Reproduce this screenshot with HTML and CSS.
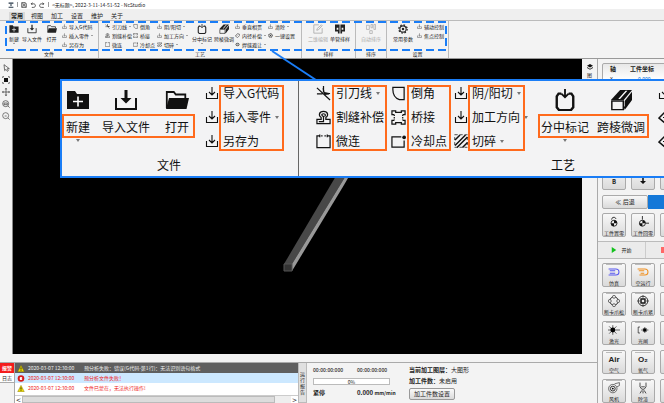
FILE: index.html
```html
<!DOCTYPE html>
<html lang="zh-CN">
<head>
<meta charset="utf-8">
<title>NcStudio</title>
<link rel="stylesheet" href="styles.css">
</head>
<body>
<svg class="defs" aria-hidden="true">
  <symbol id="newf" viewBox="0 0 24 20"><path d="M1 1h8l2 3h12v15H1z" fill="currentColor"/><path d="M12 6.500v10M7 11.500h10" stroke="#fff" stroke-width="1.600"/></symbol>
  <symbol id="import" viewBox="0 0 24 20"><path d="M2 8v11h20V8" fill="none" stroke="currentColor" stroke-width="2"/><path d="M10.500 0h3v8h4L12 13.500 6.500 8h4z" fill="currentColor"/></symbol>
  <symbol id="open" viewBox="0 0 24 20"><path d="M1.800 18V2h7l2 2.500h9.500V8" fill="none" stroke="currentColor" stroke-width="1.800"/><path d="M4 8h20l-2.500 11H1z" fill="currentColor"/></symbol>
  <symbol id="in" viewBox="0 0 14 14"><path d="M1.500 7v5.500h11V7M7 1v7.500M4 6l3 3 3-3" fill="none" stroke="currentColor" stroke-width="1.100"/></symbol>
  <symbol id="lead" viewBox="0 0 16 16"><path d="M1 2l14 13M1 8.500h6M8 0v7M15 8H9" fill="none" stroke="currentColor" stroke-width="1.300"/><path d="M7 3l1-2 1 5.500 5 1v1.500l-5 .5z" fill="currentColor"/></symbol>
  <symbol id="kerf" viewBox="0 0 16 16"><path d="M1 14.500V10h4.500V8C2.500 6 3 1.500 8 1.500S13.500 6 10.500 8v2H15v4.500zM3 12.300h5V7C5.500 6 5.500 4 8 4s2.500 2 1 3" fill="none" stroke="currentColor" stroke-width="1.300"/></symbol>
  <symbol id="micro" viewBox="0 0 16 16"><path d="M4 2H1v12.500h14V2h-3M5.500 2H7M9 2h1.500" fill="none" stroke="currentColor" stroke-width="1.300"/><path d="M4 .5v3M12 .5v3" stroke="currentColor" stroke-width="1.300"/></symbol>
  <symbol id="chamfer" viewBox="0 0 16 16"><path d="M14 1.500v13H9C4.500 13 2 9 2 4V1.500z" fill="none" stroke="currentColor" stroke-width="1.300"/></symbol>
  <symbol id="bridge" viewBox="0 0 16 16"><path d="M3.500 5H1V1h4v1.500h6V1h4v4h-2.500M3.500 11H1v4h4v-1.500h6V15h4v-4h-2.500" fill="none" stroke="currentColor" stroke-width="1.300"/><path d="M3.500 5v6M12.500 5v6" stroke="currentColor" stroke-width="1.300" stroke-dasharray="1.500 1"/></symbol>
  <symbol id="cool" viewBox="0 0 16 16"><path d="M11 3H1v11h13V7" fill="none" stroke="currentColor" stroke-width="1.300"/><circle cx="14" cy="3.500" r="2" fill="currentColor"/></symbol>
  <symbol id="hatch" viewBox="0 0 14 14"><path d="M1 6l5-5M1 11.500L11.500 1M3 13.500L13.500 3M8.500 13.500l5-5" stroke="currentColor" stroke-width="1.500"/><path d="M.7 .7h12.600v12.600H.7z" fill="none" stroke="currentColor" stroke-width=".7" stroke-dasharray="3 2"/></symbol>
  <symbol id="center" viewBox="0 0 24 24"><path d="M8 5H5L3 8v12l2.500 3h13L21 20V8l-2-3h-3" fill="none" stroke="currentColor" stroke-width="2.600"/><path d="M12 0v8M8 5l4 4 4-4" fill="none" stroke="currentColor" stroke-width="2"/></symbol>
  <symbol id="cube" viewBox="0 0 24 24"><path d="M1 12L11 1h13l-9 11z" fill="currentColor"/><path d="M16 13l8-10v9l-8 11z" fill="currentColor"/><path d="M2 13h12.500v9.500H2zM14.500 22l8.500-11" fill="none" stroke="currentColor" stroke-width="1.600"/><path d="M9 11l8-9h2l-8 9z" fill="#fff"/></symbol>
  <symbol id="tag" viewBox="0 0 14 14"><path d="M1 8l6-6 5 1 1 4-6 6z" fill="none" stroke="currentColor" stroke-width="1.500"/><path d="M5 8l3-3" stroke="currentColor"/></symbol>
  <symbol id="eye" viewBox="0 0 14 14"><path d="M1 7c3-5 9-5 12 0-3 5-9 5-12 0zM5 3v8M9 3v8" fill="none" stroke="currentColor" stroke-width="1.400"/></symbol>
  <symbol id="gear" viewBox="0 0 24 24"><circle cx="12" cy="12" r="7.500" fill="none" stroke="currentColor" stroke-width="2.500"/><circle cx="12" cy="12" r="10" fill="none" stroke="currentColor" stroke-width="3" stroke-dasharray="3.900 3.950"/><circle cx="12" cy="12" r="3" fill="currentColor"/></symbol>
  <symbol id="edit" viewBox="0 0 24 24"><path d="M14 2H2v20h20V10M9 15l1-4L20 2l2 2-9 10z" fill="none" stroke="currentColor" stroke-width="2"/></symbol>
  <symbol id="nest" viewBox="0 0 24 24"><path d="M0 1h11v15H8V9H4v5h7v9H7v-5H0zM13 1h11v17h-7v5h-4v-9h7V9h-4v7h-3z" fill="currentColor"/></symbol>
  <symbol id="sort" viewBox="0 0 24 24"><path d="M1 3h7v10H1zM12 1h4v8h-4zM19 1h4v12h-4zM9 16h6v7H9z" fill="none" stroke="currentColor" stroke-width="1.800"/></symbol>
  <symbol id="warn" viewBox="0 0 10 10"><path d="M5 .5L9.700 9.500H.3z" fill="#f0e000" stroke="#776600" stroke-width=".6"/><path d="M5 3.500v3M5 7.500v1" stroke="#111" stroke-width="1.200"/></symbol>
  <symbol id="err" viewBox="0 0 10 10"><circle cx="5" cy="5" r="4.700" fill="#d81818"/><path d="M3.500 3.500l3 3M6.500 3.500l-3 3" stroke="#fff" stroke-width="1.800"/></symbol>
</svg>

<header class="titlebar">
  <svg class="logo" viewBox="0 0 10 10"><path d="M1 1h8v2H1zM1 8h8v1.500H1zM3 4h4L5 7z" fill="#234"/></svg>
  <i class="vr"></i>
  <button aria-label="保存"><svg viewBox="0 0 10 10"><path d="M1 1h6l2 2v6H1zM3 1v3h4V1M3 9V6h4v3" fill="none" stroke="#222"/></svg></button>
  <button aria-label="撤销"><svg viewBox="0 0 10 10"><path d="M4 1L2 3l2 2M2 3h4c4 0 4 6 0 6H3" fill="none" stroke="#222" stroke-width="1.200"/></svg></button>
  <button aria-label="重做"><svg viewBox="0 0 10 10"><path d="M6 1l2 2-2 2M8 3H4C0 3 0 9 4 9h4" fill="none" stroke="#222" stroke-width="1.200"/></svg></button>
  <i class="vr"></i>
  <span>&lt;无标题&gt;, 2022-3-11-14-51-52 - NcStudio</span>
</header>
<nav class="tabs">
  <button class="on">常用</button><button>视图</button><button>加工</button><button>设置</button><button>维护</button><button>关于</button>
</nav>

<section class="ribbon">
  <div class="group g-file">
    <div class="cmds">
      <button class="big w14"><svg><use href="#newf"/></svg><span>新建</span><i class="caret"></i></button>
      <button class="big w22"><svg><use href="#import"/></svg><span>导入文件</span></button>
      <button class="big w17"><svg><use href="#open"/></svg><span>打开</span></button>
      <div class="rows r-file">
        <button><svg><use href="#in"/></svg>导入G代码</button>
        <button><svg><use href="#in"/></svg>插入零件<i class="caret"></i></button>
        <button><svg><use href="#in"/></svg>另存为</button>
      </div>
    </div>
    <h2>文件</h2>
  </div>
  <div class="group g-craft">
    <div class="cmds">
      <div class="rows w28">
        <button><svg><use href="#lead"/></svg>引刀线<i class="caret"></i></button>
        <button><svg><use href="#kerf"/></svg>割缝补偿</button>
        <button><svg><use href="#micro"/></svg>微连</button>
      </div>
      <div class="rows w24">
        <button><svg><use href="#chamfer"/></svg>倒角</button>
        <button><svg><use href="#bridge"/></svg>桥接</button>
        <button><svg><use href="#cool"/></svg>冷却点</button>
      </div>
      <div class="rows w34">
        <button><svg><use href="#in"/></svg>阴/阳切<i class="caret"></i></button>
        <button><svg><use href="#in"/></svg>加工方向<i class="caret"></i></button>
        <button><svg><use href="#hatch"/></svg>切碎<i class="caret"></i></button>
      </div>
      <button class="big w22"><svg><use href="#center"/></svg><span>分中标记</span><i class="caret"></i></button>
      <button class="big w22"><svg><use href="#cube"/></svg><span>跨棱微调</span></button>
      <div class="rows w33">
        <button><svg><use href="#in"/></svg>垂直相贯</button>
        <button><svg><use href="#tag"/></svg>内径补偿<i class="caret"></i></button>
        <button><svg><use href="#eye"/></svg>焊缝避让<i class="caret"></i></button>
      </div>
      <div class="rows">
        <button><svg><use href="#in"/></svg>清除<i class="caret"></i></button>
        <button><svg><use href="#gear"/></svg>一键设置</button>
      </div>
    </div>
    <h2>工艺</h2>
  </div>
  <div class="group g-nest">
    <div class="cmds">
      <button class="big w22" disabled><svg><use href="#edit"/></svg><span>二维编辑</span></button>
      <button class="big w22"><svg><use href="#nest"/></svg><span>单管排样</span></button>
    </div>
    <h2>排样</h2>
  </div>
  <div class="group g-sort">
    <div class="cmds">
      <button class="big w22" disabled><svg><use href="#sort"/></svg><span>自动排序</span></button>
    </div>
    <h2>排序</h2>
  </div>
  <div class="group g-set">
    <div class="cmds">
      <button class="big w22"><svg><use href="#gear"/></svg><span>常用参数</span></button>
      <div class="rows">
        <button><svg><use href="#in"/></svg>辅动控制</button>
        <button><svg><use href="#in"/></svg>焦点控制</button>
      </div>
    </div>
    <h2>设置</h2>
  </div>
</section>

<div class="body">
  <div class="left">
    <main class="work">
      <aside class="tools">
        <button aria-label="选择"><svg viewBox="0 0 12 12"><path d="M3 1l1 9 2-2 2 3 1.500-1L8 7h3z" fill="none" stroke="#333"/></svg></button>
        <button aria-label="框选"><svg viewBox="0 0 12 12"><path d="M3 3h6v6H3z" fill="#111"/><path d="M1 3V1h2M9 1h2v2M11 9v2H9M3 11H1V9" fill="none" stroke="#333"/></svg></button>
        <button aria-label="平移"><svg viewBox="0 0 12 12"><path d="M6 1v10M1 6h10" stroke="#333"/><path d="M6 0l2 2H4zM6 12l2-2H4zM0 6l2-2v4zM12 6l-2-2v4z" fill="#333"/></svg></button>
        <button aria-label="放大"><svg viewBox="0 0 12 12"><circle cx="5.500" cy="5.500" r="4.500" fill="none" stroke="#333"/><path d="M9 9l2.500 2.500M3 7V4.500h5V7z" fill="none" stroke="#333"/></svg></button>
        <button aria-label="缩放"><svg viewBox="0 0 12 12"><circle cx="5.500" cy="5.500" r="4.500" fill="none" stroke="#444"/><path d="M9 9l2.500 2.500M4 6h3" stroke="#444"/></svg></button>
      </aside>
      <div class="canvas">
        <svg class="beam"><path d="M271 205L333 100h10L279 205z" fill="#484848"/><path d="M279 205L343 100h3l-15 26-52 86z" fill="#999"/><path d="M271 205h8v7h-8z" fill="#333" stroke="#555"/></svg>
      </div>
      <div class="strip">
        <svg viewBox="0 0 12 12"><path d="M6 0l6 3.500L6 7 0 3.500z" fill="#111"/><path d="M0 6l6 3.500L12 6v2l-6 3.500L0 8z" fill="#333"/></svg>
        <span>图层</span>
      </div>
    </main>
    <footer class="dock">
      <div class="logtabs"><button class="on">报警</button><button>日志</button></div>
      <div class="log">
        <ul>
          <li class="sel"><svg class="st"><use href="#warn"/></svg><time>2020-03-07 12:30:00</time>预分析失败：错误(G代码-第1行)：无法识别语句格式</li>
          <li class="hl"><svg class="st"><use href="#err"/></svg><time>2020-03-07 12:30:00</time>预分析文件失败！</li>
          <li><svg class="st"><use href="#warn"/></svg><time>2020-03-07 12:30:00</time>文件已蒙在，无法执行操作!</li>
          <li><svg class="st"><use href="#warn"/></svg><time>2020-03-07 12:30:00</time>文件已蒙在，无法执行操作!</li>
        </ul>
        <div class="scroll"><button aria-label="向左">&lt;</button><i></i><button aria-label="向右">&gt;</button></div>
      </div>
      <button class="report">运行报告</button>
      <div class="run">
        <b class="t">00:00:00:000</b><b class="t">00:00:00:000</b>
        <div class="prog"><progress max="100" value="0" aria-label="进度"></progress><em>0%</em></div>
        <b>紧停</b><b>0.000 <small>mm/min</small></b>
      </div>
      <div class="part">
        <p><b>当前加工图层：</b>大图形</p>
        <p><b>加工件数：</b>未启用</p>
        <button>加工件数设置</button>
      </div>
    </footer>
  </div>

  <aside class="panel">
    <div class="axes">
      <table>
        <tr><th>轴</th><th>工件坐标</th></tr>
        <tr><td>X</td><td class="num">0.000</td></tr>
      </table>
    </div>
    <div class="keys jog"><button>B</button><button aria-label="向下"><svg viewBox="0 0 8 8"><path d="M3 0h2v4h3L4 8 0 4h3z" fill="#111"/></svg></button><button>Z-</button></div>
    <div class="back"><button>≪ 后退</button><button class="blue" aria-label="前进"></button></div>
    <div class="keys">
      <button><svg viewBox="0 0 20 20"><circle cx="10" cy="12" r="5" fill="none" stroke="#222" stroke-width="1.500"/><path d="M10 12V7a5 5 0 0 1 5 5zM10 12v5a5 5 0 0 1-5-5z" fill="#111"/><path d="M6 6c0-5 7-5 7-1" fill="none" stroke="#222" stroke-width="1.500"/></svg>工件置零</button>
      <button><svg viewBox="0 0 20 20"><circle cx="9" cy="12" r="5" fill="none" stroke="#222" stroke-width="1.500"/><path d="M9 12V7a5 5 0 0 1 5 5zM9 12v5a5 5 0 0 1-5-5z" fill="#111"/><path d="M9 0v6M14 12h6" stroke="#222" stroke-width="1.500"/></svg>工件回零</button>
      <button aria-label="回零"></button>
    </div>
    <div class="start"><button><svg viewBox="0 0 8 8"><path d="M1 0l6 4-6 4z" fill="#13c11c"/></svg>开始</button><button class="stop" aria-label="停止"><i></i></button></div>
    <div class="keys lamps">
      <button><svg viewBox="0 0 20 20"><path d="M1 5h12c7 0 7 10 0 10H1M3 8h9M3 12h9" fill="none" stroke="#5858f0" stroke-width="1.800"/></svg>仿真</button>
      <button><svg viewBox="0 0 20 20"><path d="M1 5h12c7 0 7 10 0 10H4M3 8h9M6 12h6" fill="none" stroke="#f09020" stroke-width="1.800"/></svg>空运行</button>
      <button aria-label="更多"></button>
      <button><svg viewBox="0 0 20 20"><circle cx="10" cy="10" r="7" fill="none" stroke="#222" stroke-width="1.500"/><g fill="#eee" stroke="#222"><circle cx="10" cy="3" r="2.500"/><circle cx="10" cy="17" r="2.500"/><circle cx="3" cy="10" r="2.500"/><circle cx="17" cy="10" r="2.500"/></g></svg>断卡爪松</button>
      <button><svg viewBox="0 0 20 20"><circle cx="10" cy="10" r="8" fill="none" stroke="#222" stroke-width="1.500"/><path d="M6 6h8v8H6zM10 0v6M10 14v6M0 10h6M14 10h6" fill="#222" stroke="#222"/><path d="M8 8h4v4H8z" fill="#eee"/></svg>断卡爪紧</button>
      <button aria-label="更多"></button>
      <button><svg viewBox="0 0 20 20"><circle cx="8" cy="10" r="4" fill="#000"/><path d="M8 2v16M0 10h20M2 4l12 12M14 4L2 16" stroke="#000"/></svg>激光</button>
      <button><svg viewBox="0 0 20 20"><circle cx="13" cy="10" r="3" fill="#000"/><path d="M5 5H2v10h3M13 5v10M7 10h12M10 7l6 6M16 7l-6 6" fill="none" stroke="#000"/></svg>光闸</button>
      <button aria-label="更多"></button>
      <button><strong>Air</strong>空气</button>
      <button><strong>O₂</strong>氧气</button>
      <button aria-label="更多"></button>
      <button><svg viewBox="0 0 20 20"><circle cx="8" cy="11" r="7" fill="none" stroke="#222"/><circle cx="8" cy="11" r="4" fill="none" stroke="#222" stroke-width="1.500"/><circle cx="8" cy="11" r="1.500"/><path d="M11 3l8-2v5l-4 2" fill="none" stroke="#222"/></svg>风机</button>
      <button><svg viewBox="0 0 20 20"><path d="M5 1v7l3 4h4l3-4V1M7 8h6M8 14l-3 5M10 14v5M12 14l3 5" fill="none" stroke="#222" stroke-width="1.300"/></svg>除渣</button>
      <button aria-label="更多"></button>
    </div>
  </aside>
</div>

<svg class="marks" aria-hidden="true"><rect x="6" y="22" width="440" height="28" fill="none" stroke="#1a7df6" stroke-width="2" stroke-dasharray="8 4"/><path d="M272 51L316 80" stroke="#1a7df6" stroke-width="2"/></svg>

<section class="zoom">
  <div class="zgroup z-file">
    <div class="cmds">
      <div class="bigs">
        <button class="big w32"><svg><use href="#newf"/></svg><span>新建</span><i class="caret"></i></button>
        <button class="big w64"><svg><use href="#import"/></svg><span>导入文件</span></button>
        <button class="big w38"><svg><use href="#open"/></svg><span>打开</span></button>
      </div>
      <div class="icons i14"><svg><use href="#in"/></svg><svg><use href="#in"/></svg><svg><use href="#in"/></svg></div>
      <div class="names n65"><button>导入G代码</button><button>插入零件<i class="caret"></i></button><button>另存为</button></div>
    </div>
    <h2>文件</h2>
  </div>
  <div class="zgroup z-craft">
    <div class="cmds">
      <div class="icons i16"><svg><use href="#lead"/></svg><svg><use href="#kerf"/></svg><svg><use href="#micro"/></svg></div>
      <div class="names n55"><button>引刀线<i class="caret"></i></button><button>割缝补偿</button><button>微连</button></div>
      <div class="icons i16"><svg><use href="#chamfer"/></svg><svg><use href="#bridge"/></svg><svg><use href="#cool"/></svg></div>
      <div class="names n44"><button>倒角</button><button>桥接</button><button>冷却点</button></div>
      <div class="icons i14"><svg><use href="#in"/></svg><svg><use href="#in"/></svg><svg><use href="#hatch"/></svg></div>
      <div class="names n57"><button>阴/阳切<i class="caret"></i></button><button>加工方向<i class="caret"></i></button><button>切碎<i class="caret"></i></button></div>
      <div class="bigs">
        <button class="big w54"><svg><use href="#center"/></svg><span>分中标记</span><i class="caret"></i></button>
        <button class="big w58"><svg><use href="#cube"/></svg><span>跨棱微调</span></button>
      </div>
      <div class="icons i14 last"><svg><use href="#in"/></svg><svg><use href="#tag"/></svg><svg><use href="#tag"/></svg></div>
    </div>
    <h2>工艺</h2>
  </div>
</section>
</body>
</html>
```
FILE: styles.css
```css
* { box-sizing: border-box; }
body {
  margin: 0;
  height: 100vh;
  display: flex;
  flex-direction: column;
  overflow: hidden;
  background: #f3f3f3;
  color: #222;
  font: 5px/8px "Noto Sans CJK SC", "Noto Sans", sans-serif;
}
button {
  font: inherit;
  color: inherit;
  background: none;
  border: 0;
  padding: 0;
  margin: 0;
  white-space: nowrap;
}
h2, p, ul { margin: 0; padding: 0; font-size: inherit; font-weight: 400; list-style: none; }
svg { display: block; flex: none; }
.defs { position: absolute; width: 0; height: 0; }
.caret {
  flex: none;
  border: 1px solid transparent;
  border-top-color: #555;
  border-bottom: 0;
}

/* title and tabs */
.titlebar {
  flex: none;
  height: 9px;
  display: flex;
  align-items: center;
  gap: 3px;
  padding-left: 8px;
  background: #fff;
}
.titlebar svg { width: 6px; height: 6px; }
.titlebar .vr { width: 1px; height: 5px; background: #999; }
.titlebar button { width: 6px; }
.tabs {
  flex: none;
  height: 11px;
  display: flex;
  align-items: flex-end;
  padding-left: 9px;
  gap: 4px;
  background: #efefef;
}
.tabs button { width: 16px; height: 8px; font-size: 6px; line-height: 8px; }
.tabs .on { background: #d8d8d8; font-weight: 700; }

/* ribbon */
.ribbon {
  flex: none;
  height: 39px;
  display: flex;
  border-top: 1px solid #bbb;
  border-bottom: 1px solid #999;
  background: #f3f3f3;
}
.group {
  flex: none;
  display: flex;
  flex-direction: column;
  justify-content: space-between;
  border-right: 1px solid #bbb;
}
.group h2, .zgroup h2 { text-align: center; }
.group .cmds { display: flex; height: 29px; }
.g-file { width: 99px; }
.g-file .cmds { padding-left: 7px; }
.g-craft { width: 203px; }
.g-craft .cmds { padding-left: 6px; }
.g-nest { width: 54px; }
.g-nest .cmds { padding-left: 5px; }
.g-sort { width: 31px; }
.g-sort .cmds { padding-left: 4px; }
.g-set { width: 62px; }
.g-set .cmds { padding-left: 5px; gap: 3px; }
.big { display: flex; flex-direction: column; align-items: center; flex: none; }
.group .big { padding-top: 3px; }
.group .big svg { width: 10px; height: 10px; margin-bottom: 1px; }
.group .big:disabled { color: #aaa; }
.w14 { width: 14px; }
.w17 { width: 17px; }
.w22 { width: 22px; }
.w24 { width: 24px; }
.w28 { width: 28px; }
.w33 { width: 33px; }
.w34 { width: 34px; }
.rows { flex: none; padding-top: 1px; }
.r-file { margin-left: 2px; }
.rows button { display: flex; align-items: center; gap: 2px; height: 9px; }
.rows svg { width: 5px; height: 5px; }

/* body */
.body { flex: 1; display: flex; min-height: 0; }
.left { flex: 1; min-width: 0; display: flex; flex-direction: column; border-right: 1px solid #aaa; }
.work { flex: 1; min-height: 0; display: flex; margin-bottom: 8px; }
.tools { width: 13px; flex: none; display: flex; flex-direction: column; align-items: center; gap: 4px; padding-top: 5px; border-right: 1px solid #888; }
.tools svg { width: 8px; height: 8px; }
.canvas { flex: 1; position: relative; background: #000; overflow: hidden; }
.beam { position: absolute; inset: 0; width: 100%; height: 100%; }
.strip { width: 15px; flex: none; display: flex; flex-direction: column; align-items: center; gap: 2px; padding-top: 5px; }
.strip svg { width: 6px; height: 6px; }
.strip span { width: 5px; line-height: 6px; }

/* bottom dock */
.dock { flex: none; height: 41px; display: flex; border-top: 1px solid #aaa; }
.logtabs { width: 15px; flex: none; border-right: 1px solid #aaa; }
.logtabs button { display: block; width: 14px; height: 10px; background: #fff; border-bottom: 1px solid #aaa; }
.logtabs .on { background: #f41c1c; color: #fff; font-weight: 700; border: 0; }
.log { width: 283px; flex: none; display: flex; flex-direction: column; background: #fff; }
.log ul { flex: 1; min-height: 0; overflow: hidden; }
.log li { display: flex; align-items: center; height: 10px; padding-left: 2px; color: #e22; white-space: nowrap; }
.log .sel { background: #5f5f5f; color: #eee; }
.log .hl { background: #cce8ff; }
.log .st { width: 8px; height: 7px; margin-right: 3px; }
.log time { width: 56px; }
.scroll { flex: none; height: 8px; display: flex; background: #eee; border-top: 1px solid #ccc; }
.scroll button { width: 7px; font-size: 8px; line-height: 6px; background: #fff; }
.scroll i { flex: 1; margin-right: 16px; background: #dcdcdc; border: 1px solid #bbb; }
.report { width: 9px; flex: none; padding: 0 1px; white-space: normal; line-height: 6px; background: #e0e0e0; border: 1px solid #bbb; border-top: 0; }
.run { width: 77px; margin-left: 6px; flex: none; display: grid; grid-template-columns: 44px 33px; align-content: start; row-gap: 4px; padding-top: 3px; white-space: nowrap; font-size: 6px; }
.run .t { font-size: 5px; font-weight: 500; }
.run small { font-size: 5px; }
.prog { grid-column: 1 / 3; position: relative; height: 7px; }
.prog progress { display: block; appearance: none; width: 100%; height: 7px; border: 1px solid #bbb; background: #fff; }
.prog progress::-webkit-progress-bar { background: #fff; }
.prog em { position: absolute; inset: 0; text-align: center; line-height: 7px; font-size: 5px; font-style: normal; }
.part { margin-left: 19px; padding-top: 3px; font-size: 6px; white-space: nowrap; }
.part p { margin-bottom: 3px; }
.part button {
  height: 12px;
  padding: 0 4px;
  border: 1px solid #999;
  border-radius: 2px;
  background: linear-gradient(#fafafa, #dadada);
}

/* control panel */
.panel { width: 66px; flex: none; overflow: hidden; padding-top: 4px; display: flex; flex-direction: column; }
.axes { flex: none; width: 100px; height: 98px; margin-left: 4px; border: 1px solid #aaa; border-radius: 2px; background: linear-gradient(#e8e8e8, #fff 16px); }
.axes table { border-spacing: 0; width: 100%; table-layout: fixed; }
.axes th, .axes td { padding: 0 0 0 7px; height: 10px; line-height: 10px; text-align: left; }
.axes th:first-child { width: 20px; }
.axes th { font-size: 6px; }
.axes .num { color: #1878d8; padding-left: 15px; }
.keys { flex: none; display: grid; grid-template-columns: repeat(3, 24px); grid-auto-rows: 24px; gap: 5px; padding-left: 4px; }
.keys button, .back button {
  border: 1px solid #aaa;
  border-radius: 2px;
  background: linear-gradient(#f8f8f8, #dadada);
}
.keys button { display: flex; flex-direction: column; align-items: center; justify-content: flex-end; line-height: 7px; }
.keys svg { width: 12px; height: 12px; margin-bottom: 1px; }
.keys strong { font: 700 8px/12px "Liberation Sans", sans-serif; }
.jog { margin-top: 5px; }
.jog button { font-size: 6px; font-weight: 700; padding-bottom: 4px; }
.jog svg { width: 6px; height: 6px; }
.back { flex: none; display: flex; margin: 5px 0 4px 4px; height: 14px; }
.back button { flex: none; width: 46px; font-size: 6px; }
.back .blue { background: #1478d8; border-color: #1478d8; border-radius: 0; }
.start { flex: none; display: flex; margin-top: 4px; height: 18px; border: 1px solid #bbb; border-left: 0; border-right: 0; }
.start button { flex: none; width: 48px; display: flex; align-items: center; justify-content: center; gap: 4px; background: #ebebeb; border-right: 1px solid #ccc; }
.start svg { width: 6px; height: 6px; }
.start .stop { justify-content: flex-start; padding-left: 15px; }
.stop i { width: 6px; height: 6px; background: #f66; }
.lamps { margin-top: 4px; }
.lamps button::before { content: ""; width: 16px; height: 1px; background: #bbb; margin-bottom: 1px; }

/* callout */
.marks { position: absolute; left: 0; top: 0; width: 100%; height: 100%; pointer-events: none; }
.zoom {
  position: absolute;
  left: 60px;
  right: 0;
  top: 79px;
  display: flex;
  overflow: hidden;
  border: 2px solid #1a7df6;
  border-right: 0;
  background: #f3f3f4;
  color: #111;
  font-size: 12px;
  line-height: 24px;
}
.zgroup { flex: none; height: 95px; overflow: hidden; }
.zgroup .cmds { display: flex; height: 72px; }
.zgroup .caret { border-width: 3px 2px 0; border-top-color: #777; }
.z-file { width: 237px; border-right: 1px solid #666; }
.z-file h2 { padding-right: 22px; }
.z-craft { width: 528px; padding-left: 17px; }
.z-craft h2 { padding-right: 17px; }
.bigs { display: flex; position: relative; }
.bigs::after, .names::after {
  content: "";
  position: absolute;
  border: 2px solid #ff6a1c;
  pointer-events: none;
}
.bigs::after { inset: 33px 1px 15px 0; }
.zgroup .big { padding-top: 8px; }
.zgroup .big svg { width: 24px; height: 22px; margin-bottom: 4px; }
.w32 { width: 32px; }
.w38 { width: 38px; }
.w64 { width: 64px; }
.w54 { width: 54px; }
.w58 { width: 58px; }
.icons { flex: none; display: flex; flex-direction: column; justify-content: space-around; }
.icons svg { width: 14px; height: 14px; }
.i16 svg { width: 15px; height: 15px; }
.z-file .icons { margin-left: 9px; }
.i14 { width: 14px; }
.i16 { width: 16px; }
.names { flex: none; position: relative; }
.names::after { inset: 4px 0 2px; }
.names button { display: flex; align-items: center; gap: 4px; height: 24px; padding-left: 4px; }
.n65 { width: 65px; }
.n55 { width: 55px; margin-right: 4px; }
.n44 { width: 44px; margin-right: 3px; }
.n57 { width: 57px; margin-right: 13px; }
.last { margin-left: 8px; }
```
